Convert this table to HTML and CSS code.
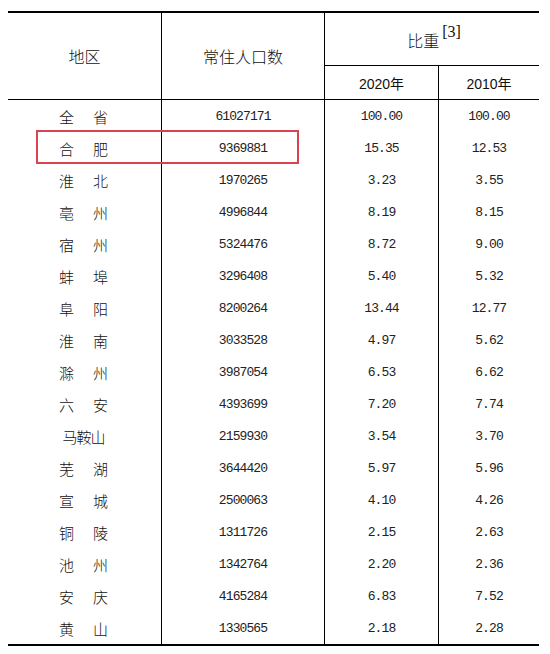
FILE: index.html
```html
<!DOCTYPE html>
<html lang="zh-CN">
<head>
<meta charset="utf-8">
<title>安徽人口</title>
<link rel="stylesheet" href="styles.css">
</head>
<body>
<div class="page">
  <div class="table">
    <div class="h h-region">地区</div>
    <div class="h h-pop">常住人口数</div>
    <div class="h h-share"><span class="share-label">比重<sup class="note">[3]</sup></span></div>
    <div class="h h-year vr">2020年</div>
    <div class="h h-year">2010年</div>

    <div class="c name vr"><span>全</span><span>省</span></div><div class="c num vr">61027171</div><div class="c num vr">100.00</div><div class="c num">100.00</div>
    <div class="c name vr"><span>合</span><span>肥</span></div><div class="c num vr">9369881</div><div class="c num vr">15.35</div><div class="c num">12.53</div>
    <div class="c name vr"><span>淮</span><span>北</span></div><div class="c num vr">1970265</div><div class="c num vr">3.23</div><div class="c num">3.55</div>
    <div class="c name vr"><span>亳</span><span>州</span></div><div class="c num vr">4996844</div><div class="c num vr">8.19</div><div class="c num">8.15</div>
    <div class="c name vr"><span>宿</span><span>州</span></div><div class="c num vr">5324476</div><div class="c num vr">8.72</div><div class="c num">9.00</div>
    <div class="c name vr"><span>蚌</span><span>埠</span></div><div class="c num vr">3296408</div><div class="c num vr">5.40</div><div class="c num">5.32</div>
    <div class="c name vr"><span>阜</span><span>阳</span></div><div class="c num vr">8200264</div><div class="c num vr">13.44</div><div class="c num">12.77</div>
    <div class="c name vr"><span>淮</span><span>南</span></div><div class="c num vr">3033528</div><div class="c num vr">4.97</div><div class="c num">5.62</div>
    <div class="c name vr"><span>滁</span><span>州</span></div><div class="c num vr">3987054</div><div class="c num vr">6.53</div><div class="c num">6.62</div>
    <div class="c name vr"><span>六</span><span>安</span></div><div class="c num vr">4393699</div><div class="c num vr">7.20</div><div class="c num">7.74</div>
    <div class="c name three vr">马鞍山</div><div class="c num vr">2159930</div><div class="c num vr">3.54</div><div class="c num">3.70</div>
    <div class="c name vr"><span>芜</span><span>湖</span></div><div class="c num vr">3644420</div><div class="c num vr">5.97</div><div class="c num">5.96</div>
    <div class="c name vr"><span>宣</span><span>城</span></div><div class="c num vr">2500063</div><div class="c num vr">4.10</div><div class="c num">4.26</div>
    <div class="c name vr"><span>铜</span><span>陵</span></div><div class="c num vr">1311726</div><div class="c num vr">2.15</div><div class="c num">2.63</div>
    <div class="c name vr"><span>池</span><span>州</span></div><div class="c num vr">1342764</div><div class="c num vr">2.20</div><div class="c num">2.36</div>
    <div class="c name vr"><span>安</span><span>庆</span></div><div class="c num vr">4165284</div><div class="c num vr">6.83</div><div class="c num">7.52</div>
    <div class="c name vr"><span>黄</span><span>山</span></div><div class="c num vr">1330565</div><div class="c num vr">2.18</div><div class="c num">2.28</div>

    <div class="highlight"></div>
  </div>
</div>
</body>
</html>
```
FILE: styles.css
```css
html, body {
  margin: 0;
  padding: 0;
  background: #ffffff;
}

.page {
  padding: 11px 0 0 8px;
  font-family: "Noto Sans CJK SC", "Noto Sans CJK TC", sans-serif;
  font-weight: 300;
  color: #111;
}

.table {
  position: relative;
  width: 531px;
  display: grid;
  grid-template-columns: 154px 163px 114px 100px;
  grid-template-rows: 53px 34px repeat(17, 32px);
  border-top: 2px solid #000;
  border-bottom: 2px solid #000;
}

.h,
.c {
  box-sizing: border-box;
  display: flex;
  align-items: center;
  justify-content: center;
}

.h {
  font-size: 16px;
  border-bottom: 1px solid #000;
}

.h-region {
  grid-column: 1;
  grid-row: 1 / 3;
  border-right: 1px solid #000;
  padding-bottom: 1px;
}

.h-pop {
  grid-column: 2;
  grid-row: 1 / 3;
  border-right: 1px solid #000;
  padding-bottom: 1px;
}

.h-share {
  grid-column: 3 / 5;
  grid-row: 1;
  padding-top: 2px;
}

.share-label {
  display: block;
  line-height: 20px;
  padding-left: 4px;
}

.note {
  font-family: "Liberation Serif", serif;
  font-size: 16px;
  font-weight: 400;
  vertical-align: 10px;
  line-height: 0;
  margin-left: 3px;
}

.h-year {
  font-family: "Liberation Sans", "Noto Sans CJK SC", sans-serif;
  font-weight: 400;
  font-size: 14px;
  padding-top: 1px;
}

.vr {
  border-right: 1px solid #000;
}

.name {
  font-size: 15px;
  gap: 19px;
  padding-right: 2px;
  padding-top: 1px;
}

.name.three {
  gap: 0;
  letter-spacing: -1px;
}

.num {
  font-family: "Liberation Mono", monospace;
  font-weight: 400;
  font-size: 13px;
  letter-spacing: -0.9px;
  padding-top: 1px;
  color: #222;
}

.highlight {
  position: absolute;
  left: 28px;
  top: 117px;
  width: 263px;
  height: 34px;
  box-sizing: border-box;
  border: 2px solid #d8434f;
  pointer-events: none;
}
```
